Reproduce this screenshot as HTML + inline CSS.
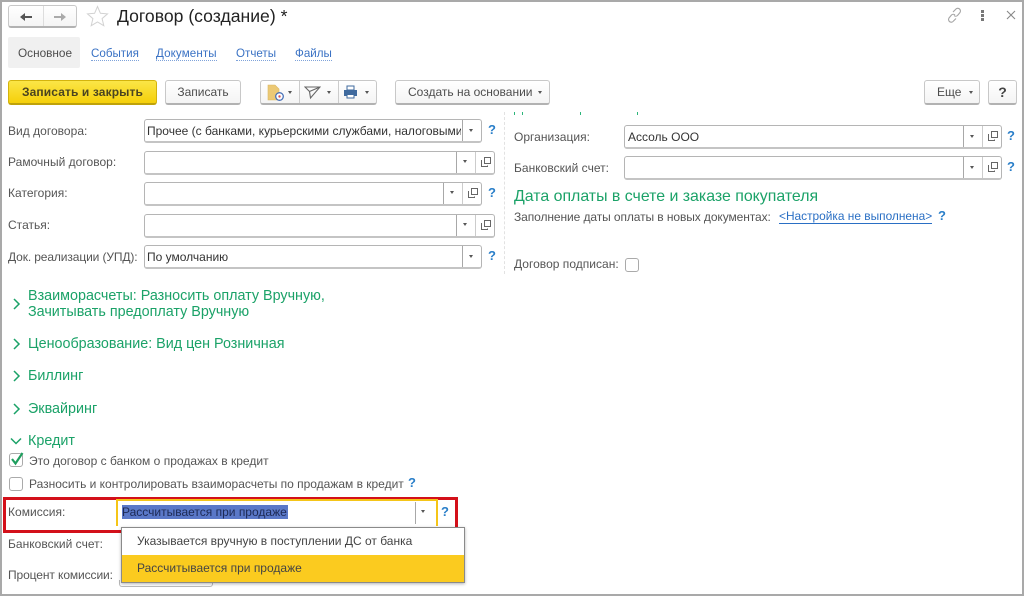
<!DOCTYPE html>
<html lang="ru"><head><meta charset="utf-8"><title>Договор (создание)</title>
<style>
html,body{margin:0;padding:0;background:#fff}
#p{position:relative;width:1024px;height:596px;overflow:hidden;background:#fff;font:12px/14px "Liberation Sans",Arial,sans-serif;color:#4d4d4d;filter:blur(.35px)}
#p div,#p a,#p svg{position:absolute}
.t{white-space:nowrap}
.l{white-space:nowrap;color:#555;letter-spacing:.02px}
.f{box-sizing:border-box;background:#fff;border:1px solid #b5b5b5;border-bottom:2px solid #c4c4c4;border-radius:3px;height:24px}
.v{white-space:nowrap;color:#333;overflow:hidden}
.d{width:1px;background:#a8a8a8}
.ar{width:0;height:0;border:2.500px solid transparent;border-top:3px solid #555;border-bottom:0}
.q{color:#2a7fc9;font-size:13px;font-weight:bold;white-space:nowrap}
.b{box-sizing:border-box;background:linear-gradient(#fff,#f4f4f4);border:1px solid #c8c8c8;border-bottom:2px solid #b2b2b2;border-radius:3px;text-align:center;color:#4d4d4d;white-space:nowrap}
.g{color:#1ba268;font-size:14.350px;line-height:15px;white-space:nowrap}
.tab{color:#3a72c4;border-bottom:1px dotted #7fa3da;line-height:13px;white-space:nowrap;font-size:11.600px}
.c{box-sizing:border-box;width:14px;height:14px;border:1px solid #aaa;border-radius:3px;background:#fff}
</style></head><body><div id="p">

<!-- frame -->
<div style="left:0;top:0;width:1024px;height:2px;background:#a9a9a9"></div>
<div style="left:0;top:0;width:2px;height:596px;background:#a9a9a9"></div>
<div style="left:1022px;top:0;width:2px;height:596px;background:#a9a9a9"></div>
<div style="left:0;top:594px;width:1024px;height:2px;background:#a9a9a9"></div>

<!-- nav -->
<div class="b" style="left:8px;top:5px;width:69px;height:23px"></div>
<div style="left:43px;top:6px;width:1px;height:20px;background:#ddd"></div>
<svg style="left:18px;top:11px" width="16" height="12" viewBox="0 0 16 12"><path d="M2 6 7 2V5H14V7H7V10Z" fill="#555"/></svg>
<svg style="left:52px;top:11px" width="16" height="12" viewBox="0 0 16 12"><path d="M14 6 9 2V5H2V7H9V10Z" fill="#aaa"/></svg>
<svg style="left:86px;top:5px" width="23" height="22" viewBox="0 0 23 22"><path d="M11.500 1.500 14.400 8.300 21.500 8.900 16.100 13.600 17.800 20.700 11.500 16.900 5.200 20.700 6.900 13.600 1.500 8.900 8.600 8.300Z" fill="#fff" stroke="#d2d2d2"/></svg>
<div class="t" style="left:117px;top:6px;font-size:17.600px;line-height:20px;color:#222">Договор (создание) *</div>

<!-- top right icons -->
<svg style="left:946px;top:7px" width="17" height="17" viewBox="0 0 17 17" fill="none" stroke="#a5a5a5" stroke-width="1.100"><path d="M7 5 9.500 2.500a2.500 2.500 0 0 1 4.500 3L11.500 8.500a2.500 2.500 0 0 1-3.500 0"/><path d="M10 11.500 7.500 14a2.500 2.500 0 0 1-4.500-3L5.500 8a2.500 2.500 0 0 1 3.500 0"/></svg>
<div style="left:981px;top:10px;width:3px;height:3px;background:#777;box-shadow:0 4px #777,0 8px #777"></div>
<svg style="left:1006px;top:10px" width="10" height="10" viewBox="0 0 10 10" stroke="#888" stroke-width="1.100"><path d="M1 1 9 9M9 1 1 9"/></svg>

<!-- tabs -->
<div style="left:8px;top:37px;width:72px;height:31px;background:#f0f0f0;border-radius:2px"></div>
<div class="t" style="left:18px;top:46px;color:#4d4d4d;font-size:11.800px">Основное</div>
<div class="tab" style="left:91px;top:47px">События</div>
<div class="tab" style="left:156px;top:47px;letter-spacing:.1px">Документы</div>
<div class="tab" style="left:236px;top:47px">Отчеты</div>
<div class="tab" style="left:295px;top:47px">Файлы</div>

<!-- toolbar -->
<div class="b" style="left:8px;top:80px;width:149px;height:25px;line-height:23px;background:linear-gradient(#fbe547,#f5cf0a);border-color:#d4b40c;border-bottom-color:#bfa20a;font-weight:bold;color:#4a4420;font-size:12px;letter-spacing:.12px">Записать и закрыть</div>
<div class="b" style="left:165px;top:80px;width:76px;height:25px;line-height:23px">Записать</div>
<div class="b" style="left:260px;top:80px;width:117px;height:25px"></div>
<div style="left:299px;top:81px;width:1px;height:22px;background:#ccc"></div>
<div style="left:338px;top:81px;width:1px;height:22px;background:#ccc"></div>
<svg style="left:266px;top:84px" width="20" height="18" viewBox="0 0 20 18"><path d="M2 1H9L13 5V16H2Z" fill="#ecc975" stroke="#d9b765" stroke-width=".6"/><circle cx="13.500" cy="12.500" r="3.800" fill="#fff" stroke="#4a72b8" stroke-width="1.300"/><circle cx="13.500" cy="12.500" r="1.200" fill="#d9534f"/></svg>
<div class="ar" style="left:288px;top:91px"></div>
<svg style="left:304px;top:85px" width="17" height="15" viewBox="0 0 17 15" fill="none" stroke="#666" stroke-width="1.100"><path d="M1 2H16L6.500 13 5.500 6.500Z"/><path d="M5.500 6.500 16 2"/></svg>
<div class="ar" style="left:327px;top:91px"></div>
<svg style="left:343px;top:85px" width="15" height="14" viewBox="0 0 15 14"><path d="M4 1H11V5H4Z" fill="#fff" stroke="#3f6a9e"/><path d="M1 5H14V11H11.500V9H3.500V11H1Z" fill="#3f6a9e"/><path d="M4 9.500H11V13H4Z" fill="#fff" stroke="#3f6a9e"/></svg>
<div class="ar" style="left:365px;top:91px"></div>
<div class="b" style="left:395px;top:80px;width:155px;height:25px;line-height:23px;text-align:left;padding-left:12px">Создать на основании</div>
<div class="ar" style="left:538px;top:91px"></div>
<div class="b" style="left:924px;top:80px;width:56px;height:25px;line-height:23px;text-align:left;padding-left:12px">Еще</div>
<div class="ar" style="left:969px;top:91px"></div>
<div class="b" style="left:988px;top:80px;width:29px;height:25px;line-height:22px;font-size:14px;font-weight:bold;color:#444">?</div>

<!-- divider and clipped group text -->
<div style="left:504px;top:112px;height:162px;border-left:1px dashed #e2e2e2"></div>
<div style="left:514px;top:112px;width:1px;height:3px;background:#2cb57a"></div>
<div style="left:522px;top:112px;width:1px;height:3px;background:#2cb57a"></div>
<div style="left:580px;top:112px;width:1px;height:3px;background:#2cb57a"></div>
<div style="left:637px;top:112px;width:1px;height:3px;background:#2cb57a"></div>

<!-- left form -->
<div class="l" style="left:8px;top:124px">Вид договора:</div>
<div class="f" style="left:144px;top:119px;width:338px"></div>
<div class="v" style="left:147px;top:124px;width:314px">Прочее (с банками, курьерскими службами, налоговыми</div>
<div class="d" style="left:462px;top:120px;height:21px"></div>
<div class="ar" style="left:469px;top:129px"></div>
<div class="q" style="left:488px;top:123px">?</div>

<div class="l" style="left:8px;top:155px">Рамочный договор:</div>
<div class="f" style="left:144px;top:151px;width:351px"></div>
<div class="d" style="left:456px;top:152px;height:21px"></div>
<div class="d" style="left:475px;top:152px;height:21px;background:#ccc"></div>
<div class="ar" style="left:463px;top:160px"></div>
<svg style="left:481px;top:157px" width="10" height="10" viewBox="0 0 10 10" fill="none" stroke="#666"><path d="M3.500 .5H9.500V6.500H3.500Z"/><path d="M1 3.500H.5V9.500H6.500V8.500"/></svg>

<div class="l" style="left:8px;top:186px">Категория:</div>
<div class="f" style="left:144px;top:182px;width:338px"></div>
<div class="d" style="left:443px;top:183px;height:21px"></div>
<div class="d" style="left:462px;top:183px;height:21px;background:#ccc"></div>
<div class="ar" style="left:450px;top:191px"></div>
<svg style="left:468px;top:188px" width="10" height="10" viewBox="0 0 10 10" fill="none" stroke="#666"><path d="M3.500 .5H9.500V6.500H3.500Z"/><path d="M1 3.500H.5V9.500H6.500V8.500"/></svg>
<div class="q" style="left:488px;top:186px">?</div>

<div class="l" style="left:8px;top:218px">Статья:</div>
<div class="f" style="left:144px;top:214px;width:351px"></div>
<div class="d" style="left:456px;top:215px;height:21px"></div>
<div class="d" style="left:475px;top:215px;height:21px;background:#ccc"></div>
<div class="ar" style="left:463px;top:223px"></div>
<svg style="left:481px;top:220px" width="10" height="10" viewBox="0 0 10 10" fill="none" stroke="#666"><path d="M3.500 .5H9.500V6.500H3.500Z"/><path d="M1 3.500H.5V9.500H6.500V8.500"/></svg>

<div class="l" style="left:8px;top:250px;letter-spacing:-.12px">Док. реализации (УПД):</div>
<div class="f" style="left:144px;top:245px;width:338px"></div>
<div class="v" style="left:147px;top:250px">По умолчанию</div>
<div class="d" style="left:462px;top:246px;height:21px"></div>
<div class="ar" style="left:469px;top:255px"></div>
<div class="q" style="left:488px;top:249px">?</div>

<!-- right form -->
<div class="l" style="left:514px;top:130px">Организация:</div>
<div class="f" style="left:624px;top:125px;width:378px"></div>
<div class="v" style="left:628px;top:130px">Ассоль ООО</div>
<div class="d" style="left:963px;top:126px;height:21px"></div>
<div class="d" style="left:982px;top:126px;height:21px;background:#ccc"></div>
<div class="ar" style="left:970px;top:135px"></div>
<svg style="left:988px;top:131px" width="10" height="10" viewBox="0 0 10 10" fill="none" stroke="#666"><path d="M3.500 .5H9.500V6.500H3.500Z"/><path d="M1 3.500H.5V9.500H6.500V8.500"/></svg>
<div class="q" style="left:1007px;top:129px">?</div>

<div class="l" style="left:514px;top:161px">Банковский счет:</div>
<div class="f" style="left:624px;top:156px;width:378px"></div>
<div class="d" style="left:963px;top:157px;height:21px"></div>
<div class="d" style="left:982px;top:157px;height:21px;background:#ccc"></div>
<div class="ar" style="left:970px;top:166px"></div>
<svg style="left:988px;top:162px" width="10" height="10" viewBox="0 0 10 10" fill="none" stroke="#666"><path d="M3.500 .5H9.500V6.500H3.500Z"/><path d="M1 3.500H.5V9.500H6.500V8.500"/></svg>
<div class="q" style="left:1007px;top:160px">?</div>

<div class="g" style="left:514px;top:189px;font-size:15.900px">Дата оплаты в счете и заказе покупателя</div>
<div class="l" style="left:514px;top:210px;letter-spacing:-.09px">Заполнение даты оплаты в новых документах:</div>
<div class="t" style="left:779px;top:210px;color:#2a6fc4;border-bottom:1px solid #2a6fc4;line-height:13px;font-size:11.900px">&lt;Настройка не выполнена&gt;</div>
<div class="q" style="left:938px;top:209px">?</div>
<div class="l" style="left:514px;top:257px">Договор подписан:</div>
<div class="c" style="left:625px;top:258px"></div>

<!-- groups -->
<svg style="left:12px;top:298px" width="9" height="12" viewBox="0 0 9 12" fill="none" stroke="#1ba268" stroke-width="1.500"><path d="M2 1 7 6 2 11"/></svg>
<div class="g" style="left:28px;top:289px">Взаиморасчеты: Разносить оплату Вручную,</div>
<div class="g" style="left:28px;top:305px">Зачитывать предоплату Вручную</div>
<svg style="left:12px;top:338px" width="9" height="12" viewBox="0 0 9 12" fill="none" stroke="#1ba268" stroke-width="1.500"><path d="M2 1 7 6 2 11"/></svg>
<div class="g" style="left:28px;top:337px">Ценообразование: Вид цен Розничная</div>
<svg style="left:12px;top:370px" width="9" height="12" viewBox="0 0 9 12" fill="none" stroke="#1ba268" stroke-width="1.500"><path d="M2 1 7 6 2 11"/></svg>
<div class="g" style="left:28px;top:369px">Биллинг</div>
<svg style="left:12px;top:403px" width="9" height="12" viewBox="0 0 9 12" fill="none" stroke="#1ba268" stroke-width="1.500"><path d="M2 1 7 6 2 11"/></svg>
<div class="g" style="left:28px;top:402px">Эквайринг</div>
<svg style="left:10px;top:437px" width="12" height="8" viewBox="0 0 12 8" fill="none" stroke="#1ba268" stroke-width="1.500"><path d="M1 1.500 6 6.500 11 1.500"/></svg>
<div class="g" style="left:28px;top:434px">Кредит</div>

<!-- checkboxes -->
<div class="c" style="left:9px;top:453px"></div>
<svg style="left:9px;top:451px" width="16" height="15" viewBox="0 0 16 15" fill="none" stroke="#1e9e5e" stroke-width="2.200"><path d="M3 8 6.500 12.500 13.500 2"/></svg>
<div class="l" style="left:29px;top:454px">Это договор с банком о продажах в кредит</div>
<div class="c" style="left:9px;top:477px"></div>
<div class="l" style="left:29px;top:477px;letter-spacing:-.01px">Разносить и контролировать взаиморасчеты по продажам в кредит</div>
<div class="q" style="left:408px;top:476px">?</div>

<!-- red highlight -->
<div style="left:3px;top:497px;width:455px;height:36px;box-sizing:border-box;border:3px solid #d3101a"></div>
<div class="l" style="left:8px;top:505px">Комиссия:</div>
<div style="left:116px;top:499px;width:322px;height:27px;box-sizing:border-box;border:2px solid #f5c518;border-bottom:0;background:#fff"></div>
<div style="left:122px;top:505px;width:166px;height:14px;background:#5a78c8"></div>
<div class="t" style="left:122px;top:505px;color:#1d2a55">Рассчитывается при продаже</div>
<div class="d" style="left:415px;top:502px;height:22px"></div>
<div class="ar" style="left:421px;top:510px"></div>
<div class="q" style="left:441px;top:505px">?</div>

<div class="l" style="left:8px;top:537px">Банковский счет:</div>
<div class="l" style="left:8px;top:568px;letter-spacing:-.1px">Процент комиссии:</div>
<div style="left:119px;top:580px;width:94px;height:7px;box-sizing:border-box;border:1px solid #bbb;border-top:0;border-radius:0 0 3px 3px"></div>

<!-- popup -->
<div style="left:121px;top:527px;width:344px;height:56px;box-sizing:border-box;border:1px solid #8a8a8a;background:#fff;box-shadow:0 1px 3px rgba(0,0,0,.3)"></div>
<div style="left:122px;top:555px;width:342px;height:27px;background:#fbcb1f"></div>
<div class="t" style="left:137px;top:534px;color:#444">Указывается вручную в поступлении ДС от банка</div>
<div class="t" style="left:137px;top:561px;color:#444">Рассчитывается при продаже</div>

</div></body></html>
